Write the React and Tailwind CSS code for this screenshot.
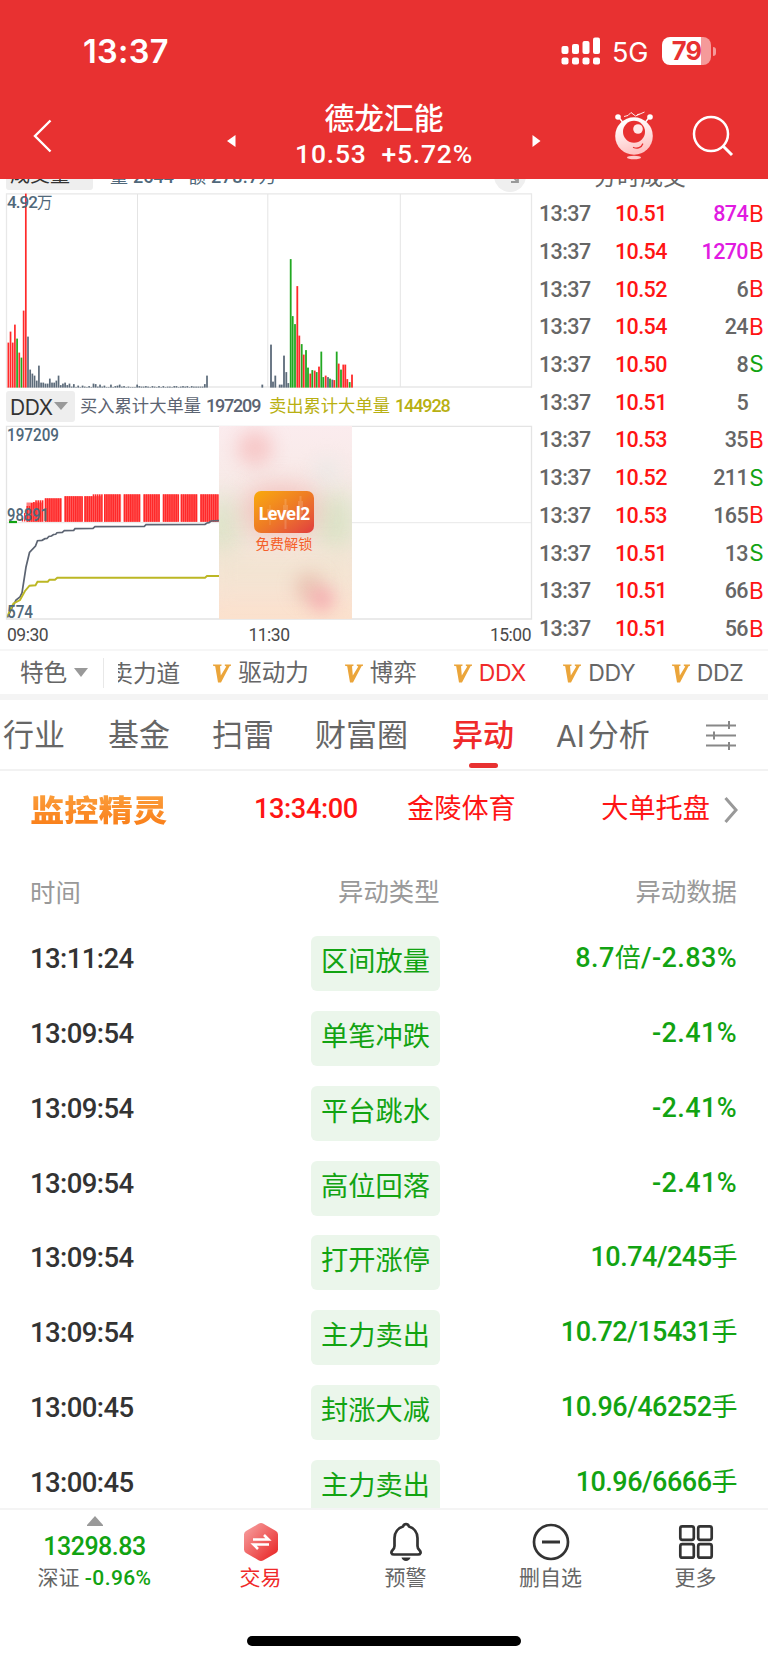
const RED = "#ff2a2a";
const GREEN = "#12a312";
const SLATE = "#5c6b7a";

// [height, colour] of every minute in the morning session
const morningBars = [
  [45, "r"], [56, "r"], [45, "r"], [63, "r"], [49, "g"], [35, "r"], [30, "g"], [77, "r"], [194, "r"],
  [51, "s"], [18, "s"], [14, "s"], [12, "s"], [7, "s"], [22, "s"], [5, "s"], [5, "s"], [4, "s"], [4, "s"],
  [9, "s"], [5, "s"], [5, "s"], [7, "s"], [12, "s"], [2.5, "s"], [4, "s"], [5, "s"], [2.5, "s"],
  [4, "s"], [1, "s"], [3.5, "s"], [0.5, "s"], [2, "s"], [0.5, "s"], [2, "s"], [1, "s"], [0.5, "s"], [1.5, "s"],
  [0.5, "s"], [4, "s"], [3.5, "s"], [1, "s"], [3, "s"], [1, "s"], [2, "s"], [0.5, "s"], [0.5, "s"], [3, "s"], [0.5, "s"],
  [1.5, "s"], [2, "s"], [3, "s"], [1, "s"], [1.5, "s"], [0.5, "s"], [1, "s"], [0.5, "s"], [0.5, "s"], [0.5, "s"],
  [3, "s"], [1.5, "s"], [1, "s"], [1, "s"], [1.5, "s"], [1, "s"], [0.5, "s"], [1.5, "s"], [1, "s"], [0.5, "s"],
  [1.5, "s"], [0.5, "s"], [1.5, "s"], [0.5, "s"], [1, "s"], [1, "s"], [0.5, "s"], [1.5, "s"], [1.5, "s"],
  [0.5, "s"], [1, "s"], [1.5, "s"], [1, "s"], [1.5, "s"], [0.5, "s"], [1.5, "s"], [1, "s"], [1, "s"],
  [1, "s"], [1, "s"], [1, "s"], [3.5, "s"], [12, "s"],
];

// [x, height, colour]
const laterBars = [
  [262.3, 3, "s"], [271, 43, "s"], [273, 6, "s"], [275.3, 12, "s"], [279.7, 3, "s"], [281.7, 3, "s"], [284, 32, "s"],
  [286.3, 15.5, "s"], [288.3, 4.5, "s"], [290.7, 128.5, "g"], [292.7, 71.5, "g"], [295, 63.5, "g"],
  [297.3, 101.5, "r"], [299.3, 52, "r"], [301.7, 43.5, "g"], [303.7, 33, "r"], [306, 37.5, "g"],
  [308, 20, "g"], [310.3, 14, "r"], [312.3, 17.5, "g"], [314.7, 17, "r"], [316.7, 15.5, "g"], [319, 21, "r"],
  [321.3, 36, "g"], [323.3, 10.5, "g"], [325.7, 12, "r"], [328, 10.5, "s"], [330, 9, "g"], [332.3, 8, "s"],
  [334.3, 7.5, "r"], [336.7, 36, "g"], [338.7, 24, "r"], [341, 18, "g"], [343.3, 23, "r"], [345.3, 23, "r"],
  [347.3, 8.5, "r"], [349.7, 5.5, "g"], [352, 13, "r"],
];

const barColor = { r: RED, g: "#22a822", s: SLATE };

const trades = [
  ["10.51", "874", "B", true],
  ["10.54", "1270", "B", true],
  ["10.52", "6", "B"],
  ["10.54", "24", "B"],
  ["10.50", "8", "S"],
  ["10.51", "5", ""],
  ["10.53", "35", "B"],
  ["10.52", "211", "S"],
  ["10.53", "165", "B"],
  ["10.51", "13", "S"],
  ["10.51", "66", "B"],
  ["10.51", "56", "B"],
];

// [time, type, value, unit, rest]
const events = [
  ["13:11:24", "区间放量", "8.7", "倍", "/-2.83%"],
  ["13:09:54", "单笔冲跌", "-2.41%"],
  ["13:09:54", "平台跳水", "-2.41%"],
  ["13:09:54", "高位回落", "-2.41%"],
  ["13:09:54", "打开涨停", "10.74/245", "手"],
  ["13:09:54", "主力卖出", "10.72/15431", "手"],
  ["13:00:45", "封涨大减", "10.96/46252", "手"],
  ["13:00:45", "主力卖出", "10.96/6666", "手"],
];

function StatusBar() {
  return (
    <div className="flex h-[102px] items-center pl-[83px] pr-[52px] font-['Inter',sans-serif]">
      <span className="mt-[2px] text-[32.5px] font-semibold leading-none tracking-[0.3px]">13:37</span>
      <svg className="ml-auto" width="40" height="28" viewBox="0 0 40 28" fill="#fff">
        <rect x="0.5" y="9" width="7" height="8" rx="2" />
        <rect x="11" y="7" width="7" height="10" rx="2" />
        <rect x="21.5" y="4" width="7" height="13" rx="2" />
        <rect x="32" y="0.5" width="7" height="16.5" rx="2" />
        <rect x="0.5" y="20.5" width="7" height="7" rx="2" />
        <rect x="11" y="20.5" width="7" height="7" rx="2" />
        <rect x="21.5" y="20.5" width="7" height="7" rx="2" />
        <rect x="32" y="20.5" width="7" height="7" rx="2" />
      </svg>
      <span className="mt-[2px] ml-[11px] w-[38px] text-[27px] leading-none tracking-[-0.2px]">5G</span>
      <div className="ml-[12px] flex h-[28px] w-[49px] items-center justify-center rounded-[8px] bg-linear-to-r from-white from-80% to-[#f59a9a] to-80%">
        <span className="text-[25.500px] font-bold leading-none tracking-[-0.8px] text-[#e83131]">79</span>
      </div>
      <div className="ml-[2px] h-[9px] w-[3px] rounded-r-full bg-[#f59a9a]" />
    </div>
  );
}

function Mascot() {
  return (
    <svg width="40" height="50" viewBox="0 0 40 50" fill="none">
      <defs>
        <linearGradient id="mascot" x1="0" y1="0" x2="0.3" y2="1">
          <stop offset="0.2" stopColor="#fff" />
          <stop offset="1" stopColor="#ffc4c4" />
        </linearGradient>
      </defs>
      <path d="M10 5.5l4-1 3-3 4.5 3.5 9-4M23 3.8l2.5-.8" stroke="#fff" strokeWidth="0.9" />
      <path d="M4.5 6l4 5M35.5 6l-4 5" stroke="#fff" strokeWidth="1.4" />
      <circle cx="4" cy="6" r="2.8" fill="#fff" />
      <circle cx="36" cy="6" r="2.8" fill="#fff" />
      <circle cx="20" cy="25" r="18.8" fill="url(#mascot)" />
      <circle cx="20" cy="20.8" r="11" fill="#e83131" />
      <circle cx="24" cy="18" r="4.8" fill="#ffe9e9" />
      <path d="M19.5 36.500c4 1.500 8 0 9.200-3.500" stroke="#e83131" strokeWidth="1.3" strokeLinecap="round" />
      <ellipse cx="20" cy="46.5" rx="7" ry="1.8" fill="#ffc9c9" />
    </svg>
  );
}

function Header() {
  return (
    <header className="h-[179px] shrink-0 bg-[#e83131] text-white">
      <StatusBar />
      <div className="flex h-[77px] items-center pl-[33px] pr-[34px]">
        <svg width="19" height="34" viewBox="0 0 19 34" className="mt-[-9px]" fill="none" stroke="#fff" strokeWidth="2.4">
          <path d="M17.5 1.5L2 17l15.5 15.5" />
        </svg>
        <svg width="9" height="12" viewBox="0 0 9 12" className="ml-[175px]" fill="#fff">
          <path d="M8.5 0v12L0 6z" />
        </svg>
        <div className="flex w-[296px] flex-col items-center">
          <h1 className="mt-[-9px] text-[29.8px] font-medium leading-[34px]">德龙汇能</h1>
          <p className="mt-[2px] whitespace-pre text-[26.5px] font-medium leading-[32px] tracking-[0.8px]">10.53  +5.72%</p>
        </div>
        <svg width="9" height="12" viewBox="0 0 9 12" fill="#fff">
          <path d="M.5 0v12L8.5 6z" />
        </svg>
        <div className="mt-[-10px] ml-[73px]">
          <Mascot />
        </div>
        <svg width="42" height="42" viewBox="0 0 42 42" className="mt-[-9px] ml-[38px]" fill="none" stroke="#fff" strokeWidth="2.5">
          <circle cx="19" cy="19" r="17" />
          <path d="M31 31l9 9" strokeWidth="3" />
        </svg>
      </div>
    </header>
  );
}

function VolumeChart() {
  return (
    <svg className="block" width="533" height="195" viewBox="0 193 533 195">
      <path d="M6.5 193.8H531.5V387H6.5z" fill="none" stroke="#e8e8e8" strokeWidth="1.3" />
      <path d="M137.5 194V387M267.8 194V387M400.3 194V387" stroke="#e4e4e4" strokeWidth="1" />
      {morningBars.map(([h, c], i) => (
        <rect key={i} x={7.5 + i * 2.183} y={387.6 - h} width="1.7" height={h} fill={barColor[c]} />
      ))}
      {laterBars.map(([x, h, c]) => (
        <rect key={x} x={x - 0.9} y={387.6 - h} width="1.8" height={h} fill={barColor[c]} />
      ))}
      <text x="7" y="208" fill="#50687a" fontSize="17">
        <tspan fontWeight="500" textLength="31">4.92</tspan>
        <tspan fontSize="15.500">万</tspan>
      </text>
    </svg>
  );
}

const ddxGroups = [
  [44.8, 62.3], [64.5, 82.4], [84.3, 102], [104, 121.5], [123.7, 141], [143.5, 160.3], [162.8, 178.5], [180.7, 198], [200.3, 218],
];

function ddxTop(x) {
  if (x < 26) return 511;
  if (x < 29) return 506;
  if (x < 32) return 503;
  if (x < 35) return 502;
  if (x < 44) return 500.3;
  if (x < 60) return 498.3;
  if (x < 91) return 496.2;
  return 494.3;
}

function DdxChart() {
  const bars = [];
  for (let x = 26.5; x < 42.5; x += 2.183) bars.push(x);
  ddxGroups.forEach(([from, to]) => {
    for (let x = from; x < to - 0.8; x += 2.1) bars.push(x);
  });
  return (
    <svg className="block" width="533" height="195" viewBox="0 425 533 195">
      <path d="M6.5 426.3H531.5V619H6.5z" fill="none" stroke="#e4e4e4" strokeWidth="1.3" />
      <path d="M7 522.7H531" stroke="#e8e8e8" strokeWidth="1" />
      <path d="M9 522H17" stroke={GREEN} strokeWidth="2.2" />
      <path d="M22.5 521.5V518M24.7 521.5V513" stroke={RED} strokeWidth="1.3" />
      {bars.map((x) => (
        <rect key={x} x={x} y={ddxTop(x)} width="1.6" height={521.8 - ddxTop(x)} fill={RED} />
      ))}
      {/* soft fill between the thin bars */}
      <rect x="26.5" y="502.5" width="15.800" height="19.3" fill={RED} opacity="0.6" />
      {ddxGroups.map(([from, to]) => (
        <rect key={from} x={from} y={ddxTop(from + 1)} width={to - from - 0.4} height={521.8 - ddxTop(from + 1)} fill={RED} opacity="0.6" />
      ))}
      <path
        d="M7.5 617.5L12 608 16 600 20 597 22 593 26 567 29.5 552.5 35.5 546 37.5 540.7 42 540.3 45 538.7 47 538.5 48.8 536.5 51.5 536 53.5 534.5 55.7 534.3 57 532.7 62.3 532.3 64.3 530.7 73.7 530.3 75 528.7 93 528.3 95 526.7 144.3 526.3 146 524.7 205 524.3 207 523 209 522.7 211 521 219 520.7"
        fill="none" stroke="#5c6472" strokeWidth="1.7"
      />
      <path
        d="M7.5 616.5L10 610 13.5 603.5 20 600 25 591 29.5 585.7 35.5 585.3 37.5 581.7H47.8L49.5 579.7H55L57.3 577.7H205L207 576H219"
        fill="none" stroke="#bcb724" strokeWidth="1.9"
      />
      <g fill="#50687a" fontSize="17.5" fontWeight="500">
        <text x="7" y="440.5" textLength="52" lengthAdjust="spacingAndGlyphs">197209</text>
        <text x="7" y="521.3" textLength="42" lengthAdjust="spacingAndGlyphs">98891</text>
        <text x="7" y="617.5" textLength="26" lengthAdjust="spacingAndGlyphs">574</text>
      </g>
    </svg>
  );
}

function UnlockPanel() {
  return (
    <div className="absolute top-[1px] left-[219px] flex h-[193px] w-[133px] flex-col items-center overflow-hidden bg-linear-to-b from-[#fbecee] via-[#f5e9e3] to-[#fbe1cd]">
      <div className="absolute top-[4px] left-[18px] size-[36px] rounded-full bg-[#f6a8a8]/50 blur-[9px]" />
      <div className="absolute top-[70px] left-[-18px] h-[60px] w-[40px] rounded-full bg-[#c9dfb4]/50 blur-[12px]" />
      <div className="absolute top-[65px] left-[98px] h-[60px] w-[38px] rounded-full bg-[#c9dfb4]/60 blur-[12px]" />
      <div className="absolute top-[32px] left-[95px] size-[26px] rounded-full bg-[#e8e8e6]/70 blur-[9px]" />
      <div className="absolute top-[58px] left-[24px] h-[52px] w-[76px] rounded-full bg-[#efa09a]/50 blur-[12px]" />
      <div className="absolute top-[130px] left-[-10px] h-[30px] w-[150px] bg-[#efe4cf]/70 blur-[12px]" />
      <div className="absolute top-[146px] left-[76px] h-[30px] w-[28px] rounded-full bg-[#dc9c8c]/40 blur-[9px]" />
      <div className="absolute top-[160px] left-[90px] size-[26px] rounded-full bg-[#f59aa5]/60 blur-[8px]" />
      <div className="relative mt-[65px] ml-[-3px] flex h-[42px] w-[60px] items-center justify-center rounded-[7px] bg-linear-to-br from-[#f9aa06] via-[#ee7b24] to-[#e03a3e]">
        <svg className="absolute inset-0" width="60" height="42" fill="#fff" opacity="0.15">
          <path d="M13 18h6v11h-6zM15.500 14h1v20h-1zM29 14h5v15h-5zM30.500 8h2v30h-2zM44 10h5v13h-5zM45.500 5h2v24h-2z" />
        </svg>
        <span className="relative mt-[2px] font-['Noto_Sans',sans-serif] text-[17px] font-bold leading-none tracking-[-0.5px] text-white">Level2</span>
      </div>
      <span className="relative mt-[1px] ml-[-3px] text-[14.2px] leading-[20px] text-[#f4602a]">免费解锁</span>
    </div>
  );
}

function Charts() {
  return (
    <div className="w-[533px] shrink-0">
      <div className="flex h-[14px] items-end overflow-hidden">
        <div className="ml-[6px] mb-[3px] flex h-[30px] w-[87px] shrink-0 items-center rounded-[3px] bg-[#eeeeee] pl-[4px] text-[20px] leading-none text-[#333]">成交量</div>
        <p className="mb-[5px] ml-[17px] whitespace-pre text-[18px] leading-[23px] text-[#50687a]">
          量<span className="ml-[5px] font-medium">2644</span>
          <span className="ml-[14px]">额</span>
          <span className="ml-[5px] font-medium tracking-[0.4px]">278.7</span>万
        </p>
        <svg className="mb-[1px] ml-auto mr-[7px] shrink-0" width="32" height="32" viewBox="0 0 32 32">
          <circle cx="16" cy="16" r="16" fill="#efefef" />
          <path d="M17 22h7v-7M23 21l-7-7" fill="none" stroke="#999" strokeWidth="1.8" />
        </svg>
      </div>
      <VolumeChart />
      <div className="flex h-[37px] items-center pl-[6px]">
        <div className="mt-[-1px] flex h-[31px] w-[69px] items-center rounded-[3px] bg-[#eeeeee] pl-[4px] text-[#333]">
          <span className="mt-[2px] w-[43px] font-['Inter',sans-serif] text-[21px] leading-none tracking-[-0.4px]">DDX</span>
          <svg className="ml-[1px]" width="14" height="8" fill="#999">
            <path d="M0 0h14L7 8z" />
          </svg>
        </div>
        <p className="mt-[-1px] ml-[5px] flex items-center text-[17.3px] leading-[24px] text-[#5c6472]">
          买入累计大单量
          <span className="ml-[5px] w-[63px] text-[18px] font-medium tracking-[-1.2px]">197209</span>
        </p>
        <p className="mt-[-1px] flex items-center text-[17.3px] leading-[24px] text-[#b8b012]">
          卖出累计大单量
          <span className="ml-[5px] text-[18px] font-medium tracking-[-1.1px]">144928</span>
        </p>
      </div>
      <div className="relative">
        <DdxChart />
        <UnlockPanel />
      </div>
      <div className="flex h-[29px] items-center justify-between pt-[2px] pl-[7px] pr-[2px] text-[17.5px] tracking-[-0.5px] text-[#4a4a4a]">
        <span>09:30</span>
        <span>11:30</span>
        <span>15:00</span>
      </div>
    </div>
  );
}

function TradeList() {
  return (
    <div className="w-[235px] text-[21.5px] leading-none text-[#666]">
      <div className="flex h-[15px] items-end justify-center overflow-hidden pr-[21px]">
        <span className="mb-[3px] text-[23px] leading-[27px]">分时成交</span>
      </div>
      <div className="pt-[1px]">
        {trades.map(([price, amount, side, big], i) => (
          <div key={i} className="flex h-[37.73px] items-center pl-[6px] pr-[5px] font-medium tracking-[-0.6px]">
            <span className="w-[76px]">13:37</span>
            <span className="w-[60px] text-[#ff1414]">{price}</span>
            <span className={big ? "ml-auto text-[#e11be1]" : "ml-auto"}>{amount}</span>
            <span
              className={
                side === "S"
                  ? "w-[15px] text-right font-['Inter',sans-serif] text-[22.5px] font-normal text-[#12a312]"
                  : "w-[15px] text-right font-['Inter',sans-serif] text-[22.5px] font-normal text-[#ff1414]"
              }
            >
              {side}
            </span>
          </div>
        ))}
      </div>
    </div>
  );
}

function VTag({ children, className }) {
  return (
    <div className={`flex shrink-0 items-center ${className}`}>
      <svg className="mr-[7px] shrink-0" width="18" height="19" viewBox="0 0 18 19">
        <path d="M0 .5h8.500v1.300l-1.500.5.800 9.200L13.300 2.600l-1.500-.8V.5H18v1.300l-1.500.5L8 18.500H5L2.200 2.300 0 1.800z" fill="#eba53a" />
      </svg>
      <span>{children}</span>
    </div>
  );
}

function IndicatorTabs() {
  return (
    <div className="flex h-[51px] shrink-0 items-center border-t-2 border-b-6 border-t-[#f6f6f6] border-b-[#f4f4f4] pl-[20px] text-[23.6px] leading-none text-[#666] whitespace-nowrap">
      <span className="mt-[2px]">特色</span>
      <svg className="ml-[7px]" width="14" height="9" fill="#999">
        <path d="M0 0h14L7 9z" />
      </svg>
      <div className="ml-[15px] h-[30px] w-px bg-[#e8e8e8]" />
      <div className="mt-[2px] ml-[14px] flex w-[62px] justify-end overflow-hidden leading-[30px]">卖力道</div>
      <div className="mt-[2px] ml-[33px] flex items-center">
        <VTag className="w-[131.5px]">驱动力</VTag>
        <VTag className="w-[109px]">博弈</VTag>
        <VTag className="w-[109.5px] font-['Inter',sans-serif] text-[23px] tracking-[-0.3px] text-[#f02a2a]">DDX</VTag>
        <VTag className="w-[108.5px] font-['Inter',sans-serif] text-[23px] tracking-[-0.3px]">DDY</VTag>
        <VTag className="font-['Inter',sans-serif] text-[23px] tracking-[-0.3px]">DDZ</VTag>
      </div>
    </div>
  );
}

function SectionTabs() {
  return (
    <nav className="flex h-[71px] shrink-0 items-center border-b-2 border-[#f2f2f2] pl-[3px] text-[31px] leading-[40px] text-[#666]">
      <span className="mt-[2px] w-[105px]">行业</span>
      <span className="mt-[2px] w-[104px]">基金</span>
      <span className="mt-[2px] w-[103px]">扫雷</span>
      <span className="mt-[2px] w-[137px]">财富圈</span>
      <div className="flex h-full w-[104px] flex-col pt-[16px] text-[#f02a2a]">
        <span className="font-medium">异动</span>
        <div className="mt-[7px] ml-[17px] h-[5px] w-[29px] rounded-full bg-[#e83131]" />
      </div>
      <span className="mt-[2px] flex items-center">
        <span className="mr-[3px] font-['Inter',sans-serif] text-[30px]">AI</span>
        分析
      </span>
      <svg className="mt-[1px] ml-auto mr-[32px]" width="30" height="29" viewBox="0 0 30 29" fill="none" stroke="#888" strokeWidth="2">
        <path d="M0 4.5h30M0 14.5h30M0 24.5h30M23 0v8M8 10.5v8M23 21v8" />
      </svg>
    </nav>
  );
}

function MonitorRow() {
  return (
    <div className="flex h-[75px] shrink-0 items-center pt-[3px] pl-[30px] pr-[30px] text-[27.2px] leading-none text-[#ff1414]">
      <span className="mt-[1px] w-[224px] scale-y-[0.86] bg-linear-to-b from-[#fba03c] to-[#f97a10] bg-clip-text text-[34.3px] font-black leading-[46px] text-transparent">监控精灵</span>
      <span className="w-[153px] font-medium tracking-[-0.4px]">13:34:00</span>
      <span>金陵体育</span>
      <span className="ml-auto">大单托盘</span>
      <svg className="ml-[14px]" width="14" height="28" viewBox="0 0 14 28" fill="none" stroke="#999" strokeWidth="3">
        <path d="M1.5 2l10.5 12L1.5 26" />
      </svg>
    </div>
  );
}

function EventTable() {
  return (
    <div className="shrink-0 pl-[30px] pr-[31px]">
      <div className="flex h-[89px] items-center justify-between text-[25.4px] leading-none text-[#999]">
        <span className="mt-[7px] w-[308px]">时间</span>
        <span className="mt-[5px]">异动类型</span>
        <span className="mt-[5px] flex-1 text-right">异动数据</span>
      </div>
      {events.map(([time, kind, value, unit, rest], i) => (
        <div key={i} className="flex h-[74.85px] items-start">
          <span className="mt-[8px] w-[281px] text-[27.5px] font-medium leading-[32px] tracking-[-0.6px] text-[#333]">{time}</span>
          <span className="mt-[1px] h-[55px] w-[129px] rounded-[6px] bg-[#ebf6eb] text-center text-[27.2px] leading-[52px] text-[#12a312]">{kind}</span>
          <span
            className={
              value === "-2.41%" || rest
                ? "mt-[7px] flex-1 text-right text-[27px] font-medium leading-[32px] tracking-[0.4px] text-[#12a312]"
                : "mt-[7px] flex-1 text-right text-[27px] font-medium leading-[32px] tracking-[-0.5px] text-[#12a312]"
            }
          >
            {value}
            {unit && <span className="text-[26px] font-normal">{unit}</span>}
            {rest}
          </span>
        </div>
      ))}
    </div>
  );
}

function NavItem({ icon, label, active }) {
  return (
    <div className="flex w-[145px] flex-col items-center pt-[11px]">
      <div className="flex h-[41px] items-center">{icon}</div>
      <span className={active ? "mt-[2px] text-[21px] leading-[28px] text-[#f02a2a]" : "mt-[2px] text-[21px] leading-[28px] text-[#666]"}>{label}</span>
    </div>
  );
}

function BottomBar() {
  return (
    <footer className="flex h-[155px] shrink-0 flex-col items-center border-t-2 border-[#f4f4f4] bg-white">
      <div className="flex h-[126px] w-full">
        <div className="flex w-[188px] flex-col items-center pl-[1px] pt-[6px]">
          <svg width="16" height="10" fill="#999">
            <path d="M8 0l8 9v1H0V9z" />
          </svg>
          <span className="mt-[7px] text-[25px] font-medium leading-[28px] tracking-[-0.5px] text-[#12a312]">13298.83</span>
          <p className="mt-[3px] text-[21px] leading-[28px] text-[#666]">
            深证 <span className="font-medium tracking-[0.4px] text-[#12a312]">-0.96%</span>
          </p>
        </div>
        <NavItem
          active
          label="交易"
          icon={
            <svg width="36" height="40" viewBox="0 0 36 40">
              <defs>
                <linearGradient id="trade" x1="0" y1="0" x2="1" y2="1">
                  <stop offset="0" stopColor="#f7a6a6" />
                  <stop offset="1" stopColor="#e81e1e" />
                </linearGradient>
              </defs>
              <path d="M15.5 1.8q2.500-1.500 5 0L33 9q2 1.300 2 3.500v15q0 2.200-2 3.500l-12.500 7.200q-2.500 1.500-5 0L3 31q-2-1.300-2-3.500v-15Q1 10.300 3 9z" fill="url(#trade)" />
              <path d="M10 17.500h15.500L21 13M26 22.500H10.500L15 27" fill="none" stroke="#fff" strokeWidth="2.6" />
            </svg>
          }
        />
        <NavItem
          label="预警"
          icon={
            <svg width="34" height="40" viewBox="0 0 34 40" fill="none" stroke="#333" strokeWidth="2.7" strokeLinejoin="round">
              <path d="M17 2.200c1.500 0 2.500 1 3 2.300 5 1.500 8.500 6 8.500 11.500v8c0 2 .5 2.800 2 4.300 2 2 1 4.200-1.500 4.200H5c-2.500 0-3.500-2.200-1.500-4.200 1.500-1.500 2-2.300 2-4.300v-8C5.500 10.500 9 6 14 4.500c.5-1.300 1.500-2.300 3-2.300z" />
              <path d="M12.500 35.500h9c-.5 2-2.500 3.500-4.500 3.500s-4-1.500-4.500-3.500z" fill="#333" stroke="none" />
            </svg>
          }
        />
        <NavItem
          label="删自选"
          icon={
            <svg width="38" height="38" viewBox="0 0 38 38" fill="none" stroke="#333" strokeWidth="2.7">
              <circle cx="19" cy="19" r="17" />
              <path d="M10 19h18" strokeWidth="3" />
            </svg>
          }
        />
        <NavItem
          label="更多"
          icon={
            <svg width="36" height="36" viewBox="0 0 36 36" fill="none" stroke="#333" strokeWidth="2.7">
              <rect x="2.3" y="2.3" width="13.5" height="13.5" rx="2" />
              <rect x="20.2" y="2.3" width="13.5" height="13.5" rx="2" />
              <rect x="2.3" y="20.2" width="13.5" height="13.5" rx="2" />
              <rect x="20.2" y="20.2" width="13.5" height="13.5" rx="2" />
            </svg>
          }
        />
      </div>
      <div className="h-[10px] w-[274px] rounded-full bg-black" />
    </footer>
  );
}

export default function App() {
  return (
    <div className="flex h-[1663px] w-[768px] flex-col overflow-hidden bg-white font-['Roboto','Noto_Sans_CJK_SC',sans-serif]">
      <Header />
      <main className="flex h-[1329px] shrink-0 flex-col overflow-hidden">
        <section className="flex h-[470px] shrink-0">
          <Charts />
          <TradeList />
        </section>
        <IndicatorTabs />
        <SectionTabs />
        <MonitorRow />
        <EventTable />
      </main>
      <BottomBar />
    </div>
  );
}
